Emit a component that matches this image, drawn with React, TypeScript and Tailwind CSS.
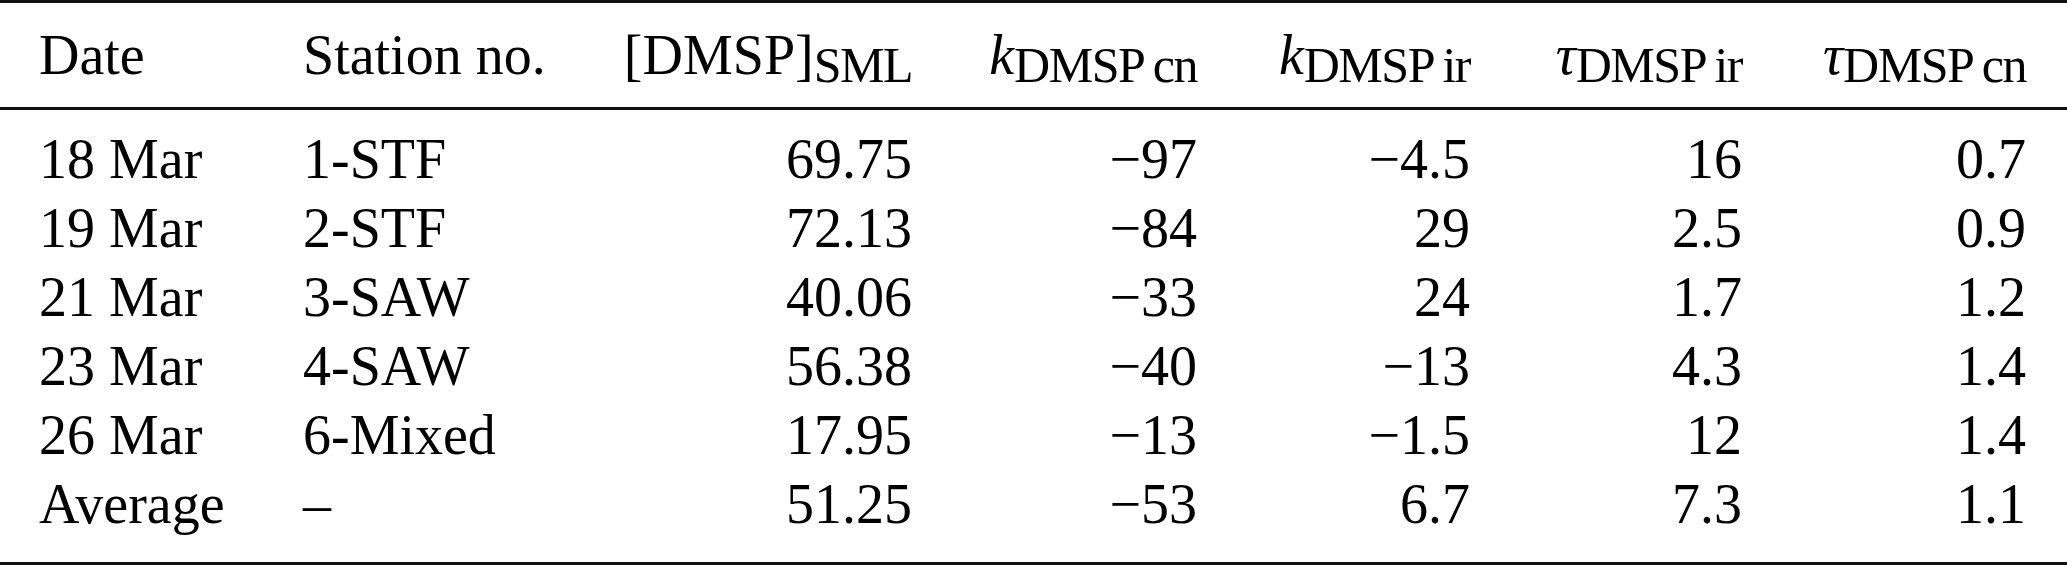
import React from 'react'

const serif = "font-[family-name:'Liberation_Serif','Times_New_Roman',serif]"

const Sub = ({ children }: { children: React.ReactNode }) => (
    <span className="text-[50px] leading-[40px] tracking-[-1.5px] align-[-8px]">{children}</span>
)

const rows = [
    ['18 Mar', '1-STF', '69.75', '\u221297', '\u22124.5', '16', '0.7'],
    ['19 Mar', '2-STF', '72.13', '\u221284', '29', '2.5', '0.9'],
    ['21 Mar', '3-SAW', '40.06', '\u221233', '24', '1.7', '1.2'],
    ['23 Mar', '4-SAW', '56.38', '\u221240', '\u221213', '4.3', '1.4'],
    ['26 Mar', '6-Mixed', '17.95', '\u221213', '\u22121.5', '12', '1.4'],
    ['Average', '\u2013', '51.25', '\u221253', '6.7', '7.3', '1.1'],
]

const cols = 'grid grid-cols-[264px_320px_289px_285px_273px_272px_284px]'

export default function App() {
    return (
        <div className={`w-[2067px] h-[565px] bg-white text-black ${serif} text-[56px] leading-[69px]`}>
            <div className="border-t-[3px] border-b-[3px] border-[#111]">
                <div className={`${cols} pl-[39px] pt-[18px] pb-[17px] border-b-[3px] border-[#111]`}>
                    <div>Date</div>
                    <div>Station no.</div>
                    <div className="text-right">
                        [DMSP]<Sub>SML</Sub>
                    </div>
                    <div className="text-right">
                        <i>k</i>
                        <Sub>DMSP&thinsp;cn</Sub>
                    </div>
                    <div className="text-right">
                        <i>k</i>
                        <Sub>DMSP&thinsp;ir</Sub>
                    </div>
                    <div className="text-right">
                        <i>τ</i>
                        <Sub>DMSP&thinsp;ir</Sub>
                    </div>
                    <div className="text-right">
                        <i>τ</i>
                        <Sub>DMSP&thinsp;cn</Sub>
                    </div>
                </div>
                <div className={`${cols} pl-[39px] pt-[15px] pb-[23px]`}>
                    {rows.map((r) =>
                        r.map((c, i) => (
                            <div key={r[0] + i} className={i < 2 ? '' : 'text-right'}>
                                {c}
                            </div>
                        ))
                    )}
                </div>
            </div>
        </div>
    )
}
